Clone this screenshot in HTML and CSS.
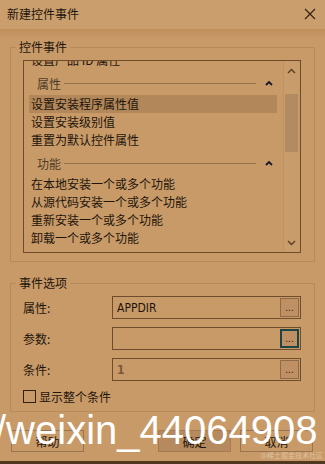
FILE: index.html
```html
<!DOCTYPE html>
<html lang="zh-CN">
<head>
    <meta charset="UTF-8">
    <meta name="viewport" content="width=device-width, initial-scale=1.0">
    <title>新建控件事件</title>
    <link rel="stylesheet" href="styles.css">
</head>
<body>
    <div class="dialog">
        <div class="titlebar">
            <span class="title">新建控件事件</span>
            <svg class="close" width="12" height="12" viewBox="0 0 12 12">
                <path d="M1 1 L11 11 M11 1 L1 11" stroke="#2e2012" stroke-width="1.1" fill="none"/>
            </svg>
        </div>

        <div class="dialog-body">
            <fieldset class="group group-events">
                <legend>控件事件</legend>
                <div class="listbox">
                    <div class="list-view">
                        <ul class="list">
                            <li class="item">设置产品 ID 属性</li>
                            <li class="header">
                                <span>属性</span><i class="rule"></i>
                                <svg class="caret" width="8" height="6" viewBox="0 0 8 6"><path d="M1 5 L4 2 L7 5" stroke="#1a1a26" stroke-width="1.8" fill="none"/></svg>
                            </li>
                            <li class="item selected">设置安装程序属性值</li>
                            <li class="item">设置安装级别值</li>
                            <li class="item">重置为默认控件属性</li>
                            <li class="header">
                                <span>功能</span><i class="rule"></i>
                                <svg class="caret" width="8" height="6" viewBox="0 0 8 6"><path d="M1 5 L4 2 L7 5" stroke="#1a1a26" stroke-width="1.8" fill="none"/></svg>
                            </li>
                            <li class="item">在本地安装一个或多个功能</li>
                            <li class="item">从源代码安装一个或多个功能</li>
                            <li class="item">重新安装一个或多个功能</li>
                            <li class="item">卸载一个或多个功能</li>
                        </ul>
                    </div>
                    <div class="scrollbar">
                        <svg class="arrow" width="9" height="6" viewBox="0 0 9 6">
                            <path d="M1 5 L4.5 1.5 L8 5" stroke="#5a3c20" stroke-width="1.4" fill="none"/>
                        </svg>
                        <div class="thumb"></div>
                        <div class="track-fill"></div>
                        <svg class="arrow" width="9" height="6" viewBox="0 0 9 6">
                            <path d="M1 1 L4.5 4.5 L8 1" stroke="#5a3c20" stroke-width="1.4" fill="none"/>
                        </svg>
                    </div>
                </div>
            </fieldset>

            <fieldset class="group group-options">
                <legend>事件选项</legend>
                <div class="field-row">
                    <label class="field-label">属性:</label>
                    <div class="textbox">
                        <span class="value">APPDIR</span>
                        <button class="browse">...</button>
                    </div>
                </div>
                <div class="field-row">
                    <label class="field-label">参数:</label>
                    <div class="textbox">
                        <span class="value"></span>
                        <button class="browse focused">...</button>
                    </div>
                </div>
                <div class="field-row">
                    <label class="field-label">条件:</label>
                    <div class="textbox">
                        <span class="value disabled">1</span>
                        <button class="browse">...</button>
                    </div>
                </div>
                <label class="check"><span class="check-box"></span>显示整个条件</label>
            </fieldset>

            <div class="buttons">
                <button class="btn">帮助</button>
                <div class="btn-pair">
                    <button class="btn btn-default">确定</button>
                    <button class="btn">取消</button>
                </div>
            </div>
        </div>

        <div class="watermark">/weixin_44064908</div>
        <div class="credit">@稀土掘金技术社区</div>
    </div>
</body>
</html>
```

FILE: styles.css
```css
body {
    margin: 0;
    padding: 0;
    background-color: #c89a68;
    font-family: "Noto Sans CJK SC", "Noto Sans", sans-serif;
    font-size: 12px;
    color: #1e150c;
    overflow: hidden;
}

.dialog {
    position: relative;
    width: 325px;
    height: 461px;
    border-bottom: 3px solid #4e3820;
    overflow: hidden;
}

.titlebar {
    height: 29px;
    display: flex;
    align-items: center;
    justify-content: space-between;
    padding: 0 9px 0 7px;
    background-color: #cb9e6d;
}

.title {
    line-height: 16px;
    margin-top: -2px;
}

.close {
    margin-top: -2px;
}

.dialog-body {
    padding: 10px 10px 0;
    background: linear-gradient(#c08f5c 0, #c89a68 9px);
}

/* 分组框 */
.group {
    margin: 0;
    padding: 5px 13px 8px 12px;
    border: 1px solid #b58b5e;
    min-inline-size: 0;
}

.group legend {
    padding: 0 3px;
    margin-left: -7px;
    line-height: 16px;
}

.group-options {
    margin-top: 13px;
    padding-bottom: 7px;
}

/* 列表 */
.listbox {
    display: flex;
    height: 191px;
    border: 1px solid #6e4c2c;
}

.list-view {
    flex: 1;
    overflow: hidden;
}

.list {
    list-style: none;
    margin: -10px 0 0;
    padding: 0;
}

.item {
    height: 18px;
    line-height: 18px;
    margin: 0 6px 0 5px;
    padding-left: 2px;
    white-space: nowrap;
}

.item.selected {
    background-color: #b2875a;
}

.header {
    height: 26px;
    display: flex;
    align-items: center;
    padding: 2px 4px 0 8px;
    margin: 0 6px 0 5px;
    box-sizing: border-box;
    color: #4e3c28;
}

.rule {
    flex: 1;
    height: 1px;
    background-color: #94704a;
    margin: 0 9px 0 3px;
}

.caret {
    flex-shrink: 0;
}

.scrollbar {
    width: 15px;
    margin-right: 2px;
    display: flex;
    flex-direction: column;
    align-items: center;
    background-color: #c99c6b;
    border-left: 1px solid #c2935f;
    box-sizing: border-box;
}

.arrow {
    margin-top: 7px;
    flex-shrink: 0;
}

.scrollbar .arrow:last-child {
    margin: 0 0 6px;
}

.thumb {
    width: 13px;
    height: 58px;
    margin-top: 20px;
    background-color: #b38b62;
}

.track-fill {
    flex: 1;
}

/* 事件选项 */
.field-row {
    display: flex;
    align-items: center;
    height: 23px;
    margin-bottom: 8px;
}

.field-label {
    width: 89px;
    flex-shrink: 0;
}

.textbox {
    flex: 1;
    height: 23px;
    box-sizing: border-box;
    border: 1px solid #6e4c2c;
    display: flex;
    align-items: center;
    justify-content: space-between;
    padding: 0 1px 0 4px;
}

.value {
    font-family: "DejaVu Sans Condensed", "Liberation Sans", sans-serif;
    font-size: 12px;
    color: #1e150c;
}

.value.disabled {
    color: #7a5838;
    font-weight: bold;
}

.browse {
    width: 19px;
    height: 19px;
    padding: 0;
    border: 1px solid #8e6c4a;
    background-color: #bf9064;
    font-family: "Liberation Sans", sans-serif;
    font-size: 10px;
    line-height: 14px;
    color: #2a1c10;
}

.browse.focused {
    border: 2px solid #1c4646;
}

.check {
    display: flex;
    align-items: center;
    height: 16px;
    margin-top: -1px;
}

.check-box {
    width: 11px;
    height: 11px;
    border: 1px solid #2e2012;
    margin-right: 3px;
}

/* 底部按钮 */
.buttons {
    display: flex;
    justify-content: space-between;
    margin: 18px 2px 0 1px;
}

.btn-pair {
    display: flex;
    gap: 9px;
}

.btn {
    width: 73px;
    height: 22px;
    padding: 0;
    border: 1px solid #9a7450;
    background-color: #c89a68;
    font-family: "Noto Sans CJK SC", sans-serif;
    font-size: 12px;
    color: #1e150c;
}

.btn-default {
    background-color: #b58a5e;
    border-color: #a47a52;
}

/* 水印 */
.watermark {
    position: absolute;
    left: -5px;
    top: 410px;
    font-family: "Liberation Sans", Arial, sans-serif;
    font-size: 40px;
    line-height: 40px;
    color: #ffffff;
    white-space: nowrap;
}

.credit {
    position: absolute;
    right: 2px;
    top: 451px;
    font-size: 7px;
    line-height: 9px;
    color: #e4ccac;
    opacity: 0.8;
}
```
